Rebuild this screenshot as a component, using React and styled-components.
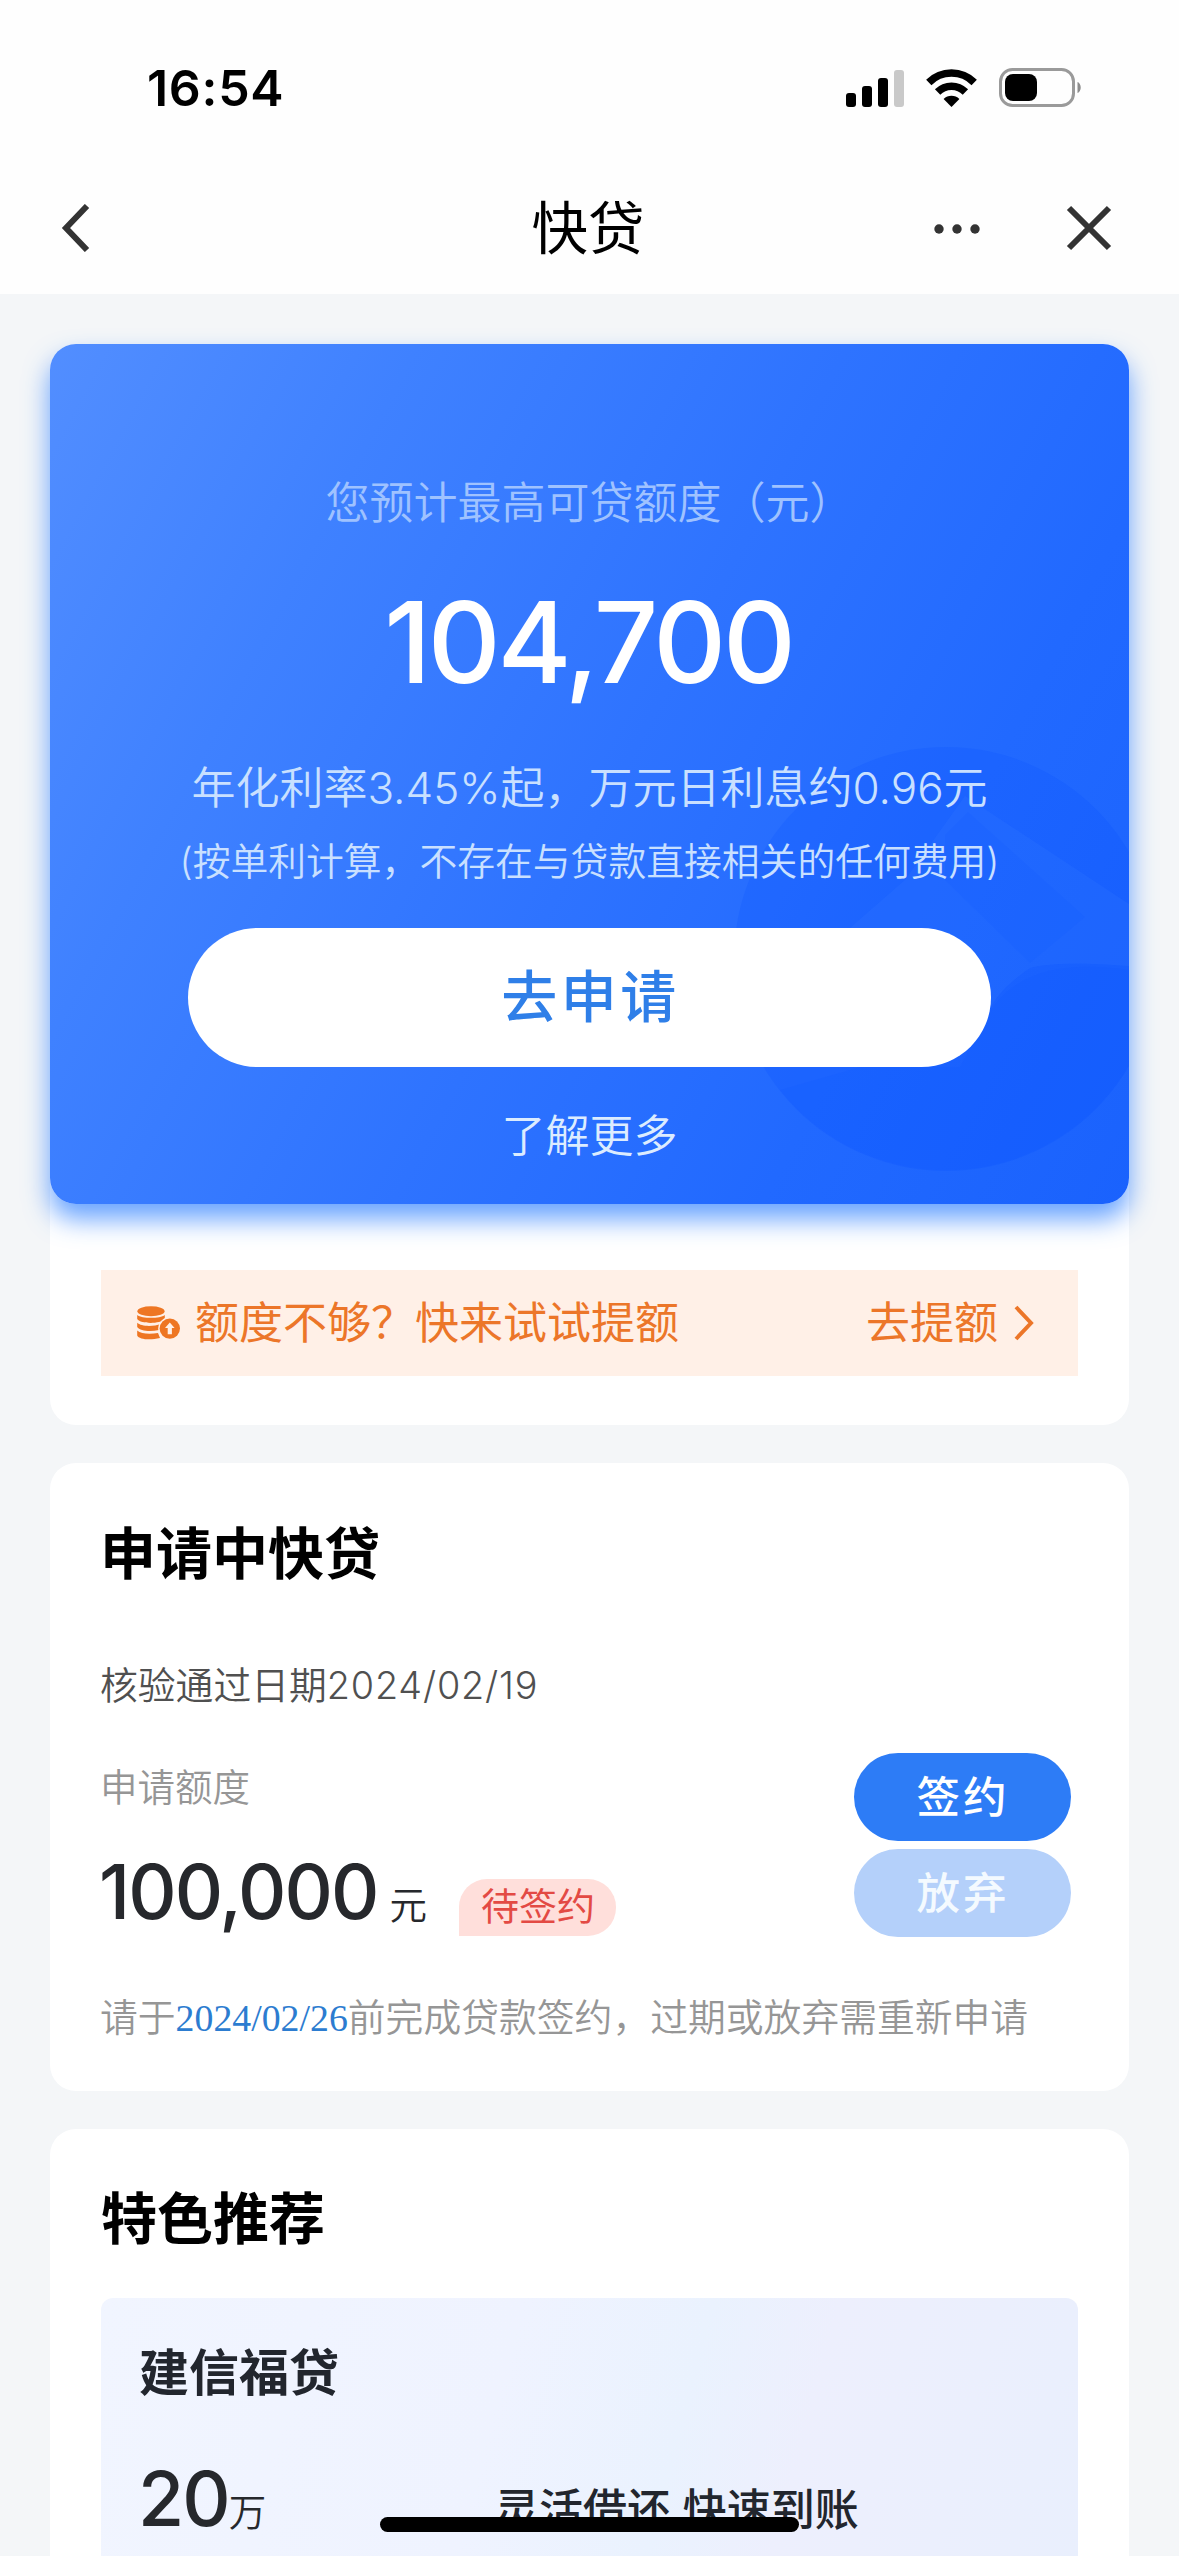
import React from 'react';
import styled, { createGlobalStyle } from 'styled-components';

const GlobalStyle = createGlobalStyle`
    * {
        box-sizing: border-box;
    }

    body {
        margin: 0;
        background: #f4f6f8;
        font-family: Inter, "Noto Sans CJK SC", sans-serif;
    }
`

const Page = styled.div`
    position: relative;
    width: 1179px;
    height: 2556px;
    overflow: hidden;
    background: #f4f6f8;
`

const Top = styled.header`
    height: 294px;
    background: #fefefe;
`

const StatusBar = styled.div`
    display: flex;
    justify-content: space-between;
    align-items: center;
    height: 176px;
    padding: 0 97px 0 147px;
`

const Time = styled.div`
    font-size: 50px;
    font-weight: 600;
    line-height: 60px;
    letter-spacing: 0.7px;
    color: #000;
`

const StatusIcons = styled.div`
    display: flex;
    align-items: center;
    gap: 22px;
`

const NavBar = styled.nav`
    display: grid;
    grid-template-columns: 300px 1fr 300px;
    align-items: center;
    height: 104px;
`

const NavTitle = styled.h1`
    margin: 0;
    padding: 2px 3px 0 0;
    font-size: 56.5px;
    font-weight: 400;
    line-height: 80px;
    text-align: center;
    color: #000;
`

const NavLeft = styled.div`
    display: flex;
    padding-left: 60px;
`

const NavRight = styled.div`
    display: flex;
    align-items: center;
    justify-content: flex-end;
    gap: 83px;
    padding-right: 66px;
`

const Content = styled.main`
    display: flex;
    flex-direction: column;
    gap: 38px;
    padding: 50px 50px 0;
`

const Card = styled.section`
    height: ${p => p.$height}px;
    padding: ${p => p.$pad || '0'};
    border-radius: 26px;
    background: #fff;
`

const Hero = styled.div`
    position: relative;
    display: flex;
    flex-direction: column;
    align-items: center;
    height: 860px;
    padding-top: 127px;
    border-radius: 26px;
    background: linear-gradient(118deg, #528eff 0%, #3f81ff 24%, #2e73ff 52%, #2169ff 76%, #1a62fd 100%);
    box-shadow: 0 15px 26px rgba(40, 124, 255, 0.7);
`

const Watermark = styled.svg`
    position: absolute;
    right: 0;
    bottom: 0;
    border-radius: 0 0 26px 0;
`

const HeroText = styled.div`
    position: relative;
    font-size: ${p => p.$size}px;
    font-weight: 350;
    line-height: 64px;
    margin-top: ${p => p.$top || 0}px;
    white-space: nowrap;
    color: ${p => p.$color};
`

const HeroAmount = styled.div`
    position: relative;
    margin-top: 38px;
    padding-right: 2px;
    font-size: 113px;
    font-weight: 500;
    line-height: 138px;
    letter-spacing: -3.2px;
    color: #fff;
`

const ApplyButton = styled.button`
    position: relative;
    width: 803px;
    height: 139px;
    margin-top: 35px;
    padding: 0 0 11px 2px;
    border: 0;
    border-radius: 70px;
    background: #fff;
    font-family: inherit;
    font-size: 56px;
    font-weight: 500;
    letter-spacing: 3.5px;
    color: #2f7fe8;
`

const RaiseBar = styled.div`
    display: flex;
    align-items: center;
    height: 106px;
    margin: 66px 51px 0;
    padding: 0 44px 0 35px;
    background: #fff0e7;
    color: #ec7629;
    font-size: 44px;
    line-height: 64px;
`

const RaiseText = styled.span`
    flex: 1;
    padding-left: 14px;
`

const RaiseLink = styled.span`
    display: flex;
    align-items: center;
    gap: 16px;
`

const CardTitle = styled.h2`
    margin: 0;
    font-size: 56px;
    font-weight: 700;
    line-height: 80px;
    color: #000;
`

const VerifyDate = styled.div`
    margin-top: 63px;
    font-size: 37.8px;
    font-weight: 350;
    line-height: 56px;
    color: #505050;

    span {
        letter-spacing: 0.8px;
    }
`

const LoanRow = styled.div`
    display: flex;
    justify-content: space-between;
    margin-top: 40px;
    padding-right: 9px;
`

const LoanLabel = styled.div`
    margin-top: 7px;
    font-size: 37.5px;
    font-weight: 350;
    line-height: 56px;
    color: #969696;
`

const AmountLine = styled.div`
    display: flex;
    align-items: baseline;
    margin-top: 30px;
    white-space: nowrap;
`

const Amount = styled.span`
    margin-left: -1px;
    font-size: 75px;
    font-weight: 500;
    line-height: 92px;
    letter-spacing: -1.9px;
    color: #26282c;
`

const Unit = styled.span`
    margin-left: ${p => p.$gap}px;
    font-size: 37.5px;
    font-weight: 350;
    color: #26282c;
`

const Tag = styled.span`
    align-self: flex-end;
    height: 57px;
    margin: 0 0 2px 32px;
    padding: 0 21px 0 22px;
    border-radius: 28px 28px 28px 0;
    background: #ffdfdb;
    font-size: 38px;
    line-height: 54px;
    color: #e34a44;
`

const Actions = styled.div`
    display: flex;
    flex-direction: column;
    gap: 8px;
`

const PillButton = styled.button`
    width: 217px;
    height: 88px;
    padding: 0 0 5px 1px;
    border: 0;
    border-radius: 44px;
    background: ${p => p.$muted ? '#b4d0fa' : '#2d7cf6'};
    font-family: inherit;
    font-size: 43.5px;
    font-weight: 500;
    letter-spacing: 3px;
    color: ${p => p.$muted ? '#f4faff' : '#fff'};
`

const Notice = styled.div`
    margin-top: 51px;
    font-size: 37.8px;
    font-weight: 350;
    line-height: 56px;
    white-space: nowrap;
    color: #969696;
`

const NoticeDate = styled.span`
    font-family: "Liberation Serif", serif;
    font-weight: 400;
    color: #2c7cd0;
`

const Product = styled.div`
    height: 300px;
    margin-top: 39px;
    padding: 39px 39px 0 38px;
    border-radius: 12px;
    background: linear-gradient(105deg, #f1f5ff 0%, #eff3ff 40%, #eaf2fe 58%, #edeffd 70%, #e9effd 100%);
    color: #22262e;
`

const ProductName = styled.h3`
    margin: 0;
    font-size: 50px;
    font-weight: 700;
    line-height: 72px;
`

const ProductRow = styled.div`
    display: flex;
    align-items: baseline;
    margin-top: 44px;
`

const ProductAmount = styled.div`
    width: 356px;
`

const ProductDesc = styled.div`
    font-size: 44px;
    font-weight: 500;
    line-height: 64px;
`

const HomeIndicator = styled.div`
    position: absolute;
    left: 380px;
    bottom: 24px;
    width: 419px;
    height: 15px;
    border-radius: 8px;
    background: #000;
`

const SignalIcon = () => (
    <svg width="58" height="38" viewBox="0 0 58 38">
        <rect x="0" y="24" width="10" height="14" rx="3" />
        <rect x="16" y="17" width="10" height="21" rx="3" />
        <rect x="32" y="9" width="10" height="29" rx="3" />
        <rect x="48" y="1" width="10" height="37" rx="3" fill="#c9c9c9" />
    </svg>
)

const WifiIcon = () => (
    <svg width="51" height="38" viewBox="0 0 51 38">
        <g fill="none" stroke="#000" strokeWidth="7.5">
            <path d="M2.8 13.5 A32 32 0 0 1 48.2 13.5" />
            <path d="M11.6 23 A19.5 19.5 0 0 1 39.4 23" />
        </g>
        <path d="M25.5 38 L17.6 30 A11.4 11.4 0 0 1 33.4 30 Z" />
    </svg>
)

const BatteryIcon = () => (
    <svg width="83" height="40" viewBox="0 0 83 40">
        <rect x="1.5" y="1.5" width="73" height="36" rx="12" fill="none" stroke="#9a9a9a" strokeWidth="3" />
        <rect x="6" y="6" width="32" height="27" rx="8" />
        <path d="M78.5 14 C82.8 15.5 82.8 23.5 78.5 25 Z" fill="#8c8c8c" />
    </svg>
)

const CoinsIcon = () => (
    <svg width="45" height="34" viewBox="0 0 45 34" fill="#ee7623">
        <ellipse cx="15" cy="5.2" rx="13.6" ry="5" />
        <path d="M1.2 9 C6 12.8 24 12.8 28.8 9 V13 C24 18.2 5 18.2 1.2 13 Z" />
        <path d="M1.2 16.8 C5 20.6 17 20.8 25 18 L23 24 C14 26 4 25 1.2 21 Z" />
        <path d="M1.2 24.6 C5 28 14 28.4 22 27 L24 32 C14 34.4 3 33.4 1.2 29.4 Z" />
        <circle cx="33.8" cy="22.6" r="11.6" fill="#fff0e7" />
        <circle cx="33.8" cy="22.6" r="10.2" />
        <path d="M33.8 16.4 L38.6 22 H35.9 V28.2 H31.7 V22 H29 Z" fill="#fff0e7" />
    </svg>
)

const HeroWatermark = () => (
    <Watermark width="420" height="470" viewBox="709 734 420 470">
        <circle cx="946" cy="959" r="212" fill="#0550ff" opacity="0.18" />
        <path d="M965 796 L1129 904 L1129 966 C1070 962 1045 964 1030 968 C1005 985 992 1000 985 1020 L850 928 L905 880 Z" fill="#4d8cff" opacity="0.12" />
        <path d="M945 835 L968 812 L1085 917 L1030 963 L945 880 Z" fill="#0550ff" opacity="0.08" />
        <path d="M1129 970 C1060 960 1010 972 985 1020 L960 1067 L860 1067 L780 1090 A212 212 0 0 0 1129 1065 Z" fill="#0550ff" opacity="0.08" />
    </Watermark>
)

export default class App extends React.Component {

    render(){

        return <Page>
            <GlobalStyle />
            <Top>
                <StatusBar>
                    <Time>16:54</Time>
                    <StatusIcons>
                        <SignalIcon />
                        <WifiIcon />
                        <BatteryIcon />
                    </StatusIcons>
                </StatusBar>
                <NavBar>
                    <NavLeft>
                        <svg width="32" height="48" viewBox="0 0 32 48" fill="none" stroke="#333" strokeWidth="6">
                            <path d="M27 2 L6 24 L27 46" />
                        </svg>
                    </NavLeft>
                    <NavTitle>快贷</NavTitle>
                    <NavRight>
                        <svg width="50" height="12" viewBox="0 0 50 12" fill="#333">
                            <circle cx="7" cy="7" r="4.7" />
                            <circle cx="25" cy="7" r="4.7" />
                            <circle cx="43" cy="7" r="4.7" />
                        </svg>
                        <svg width="48" height="46" viewBox="0 0 48 46" fill="none" stroke="#333" strokeWidth="6">
                            <path d="M4 3 L44 43 M44 3 L4 43" />
                        </svg>
                    </NavRight>
                </NavBar>
            </Top>
            <Content>
                <Card $height={1081}>
                    <Hero>
                        <HeroWatermark />
                        <HeroText $size={44} $color="#9fc2ff">您预计最高可贷额度（元）</HeroText>
                        <HeroAmount>104,700</HeroAmount>
                        <HeroText $size={44} $top={45} $color="#c9e0ff">年化利率3.45%起，万元日利息约0.96元</HeroText>
                        <HeroText $size={37.8} $top={9} $color="#c9e0ff">(按单利计算，不存在与贷款直接相关的任何费用)</HeroText>
                        <ApplyButton>去申请</ApplyButton>
                        <HeroText $size={44} $top={37} $color="#dcecff">了解更多</HeroText>
                    </Hero>
                    <RaiseBar>
                        <CoinsIcon />
                        <RaiseText>额度不够？快来试试提额</RaiseText>
                        <RaiseLink>
                            去提额
                            <svg width="20" height="36" viewBox="0 0 20 36" fill="none" stroke="#ec7629" strokeWidth="4">
                                <path d="M2 2 L17 18 L2 34" />
                            </svg>
                        </RaiseLink>
                    </RaiseBar>
                </Card>
                <Card $height={628} $pad="51px 49px 0 50px">
                    <CardTitle>申请中快贷</CardTitle>
                    <VerifyDate>核验通过日期<span>2024/02/19</span></VerifyDate>
                    <LoanRow>
                        <div>
                            <LoanLabel>申请额度</LoanLabel>
                            <AmountLine>
                                <Amount>100,000</Amount>
                                <Unit $gap={12}>元</Unit>
                                <Tag>待签约</Tag>
                            </AmountLine>
                        </div>
                        <Actions>
                            <PillButton>签约</PillButton>
                            <PillButton $muted>放弃</PillButton>
                        </Actions>
                    </LoanRow>
                    <Notice>请于<NoticeDate>2024/02/26</NoticeDate>前完成贷款签约，过期或放弃需重新申请</Notice>
                </Card>
                <Card $height={500} $pad="50px 51px 0">
                    <CardTitle>特色推荐</CardTitle>
                    <Product>
                        <ProductName>建信福贷</ProductName>
                        <ProductRow>
                            <ProductAmount>
                                <Amount>20</Amount>
                                <Unit $gap={0}>万</Unit>
                            </ProductAmount>
                            <ProductDesc>灵活借还 快速到账</ProductDesc>
                        </ProductRow>
                    </Product>
                </Card>
            </Content>
            <HomeIndicator />
        </Page>;

    }

}
